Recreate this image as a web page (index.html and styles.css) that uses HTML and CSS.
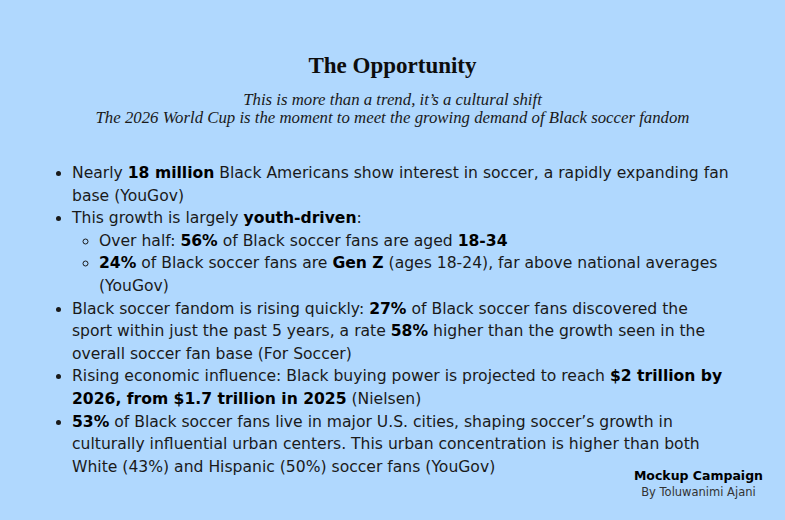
FILE: index.html
```html
<!DOCTYPE html>
<html lang="en">
<head>
<meta charset="utf-8">
<title>The Opportunity</title>
<link rel="stylesheet" href="styles.css">
</head>
<body>
<main class="slide">
  <header class="head">
    <h1 class="title">The Opportunity</h1>
    <p class="sub">This is more than a trend, it’s a cultural shift<br>The 2026 World Cup is the moment to meet the growing demand of Black soccer fandom</p>
  </header>
  <ul class="list">
    <li>Nearly <b>18 million</b> Black Americans show interest in soccer, a rapidly expanding fan base (YouGov)</li>
    <li>This growth is largely <b>youth-driven</b>:
      <ul class="sublist">
        <li>Over half: <b>56%</b> of Black soccer fans are aged <b>18-34</b></li>
        <li><b>24%</b> of Black soccer fans are <b>Gen Z</b> (ages 18-24), far above national averages (YouGov)</li>
      </ul>
    </li>
    <li>Black soccer fandom is rising quickly: <b>27%</b> of Black soccer fans discovered the sport within just the past 5 years, a rate <b>58%</b> higher than the growth seen in the overall soccer fan base (For Soccer)</li>
    <li>Rising economic influence: Black buying power is projected to reach <b>$2 trillion by 2026, from $1.7 trillion in 2025</b> (Nielsen)</li>
    <li><b>53%</b> of Black soccer fans live in major U.S. cities, shaping soccer’s growth in culturally influential urban centers. This urban concentration is higher than both White (43%) and Hispanic (50%) soccer fans (YouGov)</li>
  </ul>
  <footer class="credit">
    <div class="credit-name">Mockup Campaign</div>
    <div class="credit-by">By Toluwanimi Ajani</div>
  </footer>
</main>
</body>
</html>
```
FILE: styles.css
```css
html, body {
  margin: 0;
  padding: 0;
}
body {
  background: #b0d8fe;
  width: 785px;
  height: 520px;
  overflow: hidden;
}
.slide {
  position: relative;
  height: 520px;
  box-sizing: border-box;
  padding: 51px 54px 0 72px;
  color: #1a1a1a;
}
.head {
  text-align: center;
  margin-left: -72px;
  margin-right: -54px;
}
.title {
  margin: 0;
  font-family: "Liberation Serif", serif;
  font-weight: bold;
  font-size: 23px;
  line-height: 30px;
  color: #0d0d0d;
}
.sub {
  margin: 10px 0 0;
  font-family: "Liberation Serif", serif;
  font-style: italic;
  font-size: 16.8px;
  line-height: 18px;
}
.list {
  margin: 35px 0 0;
  padding: 0;
  font-family: "DejaVu Sans", sans-serif;
  font-size: 15.6px;
  line-height: 22.6px;
}
.list b {
  font-weight: bold;
  color: #000;
}
.sublist {
  margin: 0;
  padding-left: 27px;
  list-style: circle;
}
.credit {
  position: absolute;
  right: 22px;
  bottom: 19px;
  text-align: center;
  font-family: "DejaVu Sans", sans-serif;
}
.credit-name {
  font-weight: bold;
  font-size: 12.5px;
  line-height: 17px;
  color: #000;
}
.credit-by {
  font-size: 11.5px;
  line-height: 17px;
  color: #333;
}
```
